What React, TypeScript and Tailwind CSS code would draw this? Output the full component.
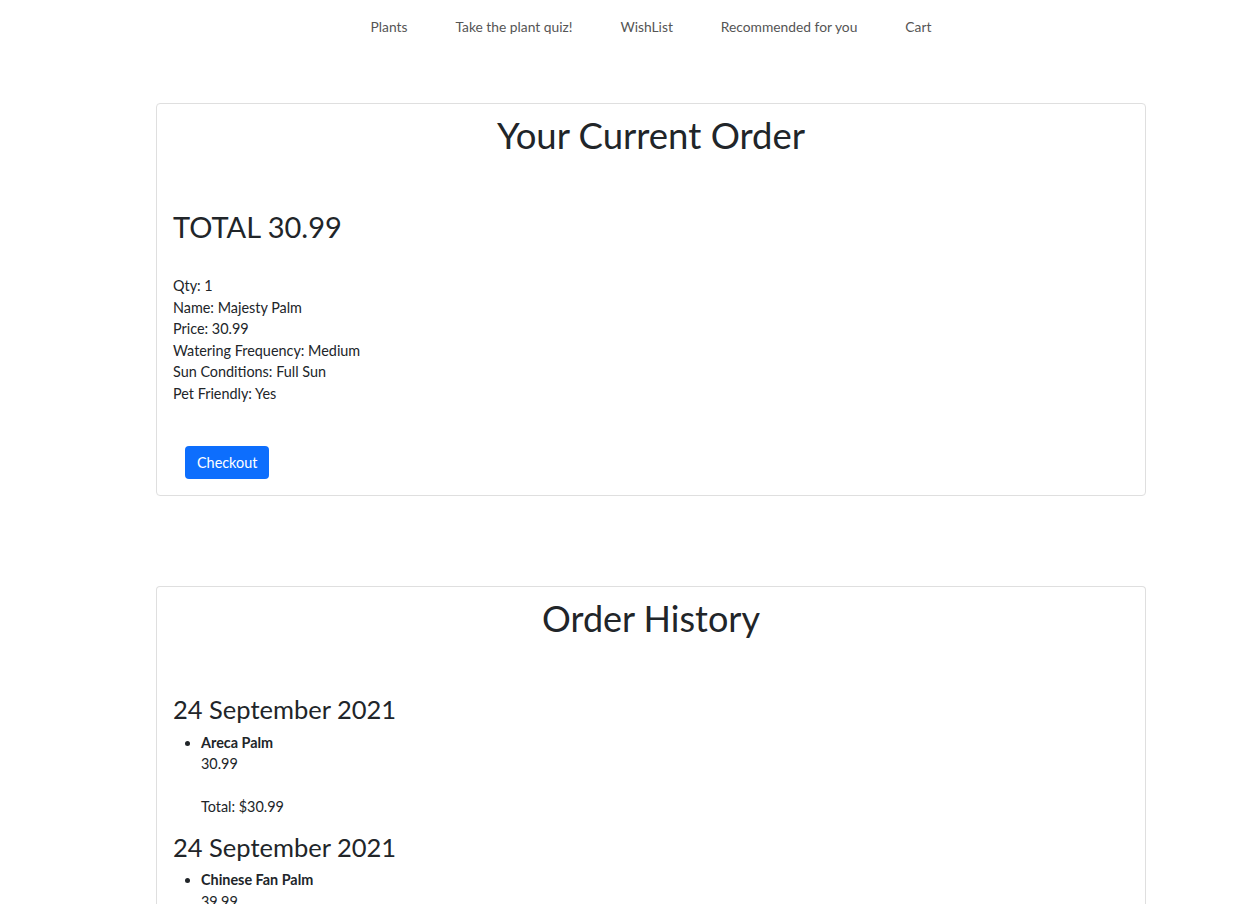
import React from "react";

const font = { fontFamily: "Lato, 'Liberation Sans', sans-serif" };

export default function App() {
  return (
    <div className="min-h-[904px] bg-white pl-[60px] text-[#212529]" style={font}>
      <nav className="flex justify-center gap-[48px] pt-[17px] pb-[7px] text-[13.8px] text-[#555]">
        <a className="leading-[20px]">Plants</a>
        <a className="leading-[20px]">Take the plant quiz!</a>
        <a className="leading-[20px]">WishList</a>
        <a className="leading-[20px]">Recommended for you</a>
        <a className="leading-[20px]">Cart</a>
      </nav>

      <div className="mx-auto mt-[59px] w-[990px] rounded-[4px] border border-[#dfdfdf] p-[16px] text-[14.4px] leading-[21.6px]">
        <h1 className="text-center text-[36.5px] leading-[31px]">Your Current Order</h1>
        <h2 className="mt-[57px] text-[29px] leading-[38px]">TOTAL 30.99</h2>
        <div className="mt-[29px]">
          <div>Qty: 1</div>
          <div>Name: Majesty Palm</div>
          <div>Price: 30.99</div>
          <div>Watering Frequency: Medium</div>
          <div>Sun Conditions: Full Sun</div>
          <div>Pet Friendly: Yes</div>
        </div>
        <button className="ml-[12px] mt-[41px] rounded-[4px] bg-[#0d6efd] px-[12px] py-[6px] text-[14.4px] leading-[21px] text-white">
          Checkout
        </button>
      </div>

      <div className="mx-auto mt-[90px] w-[990px] rounded-t-[4px] border border-b-0 border-[#dfdfdf] p-[16px] pb-0 text-[14.4px] leading-[21.6px]">
        <h1 className="text-center text-[36px] leading-[31px]">Order History</h1>
        {[
          { name: "Areca Palm", price: "30.99" },
          { name: "Chinese Fan Palm", price: "39.99" },
        ].map((o, i) => (
          <div key={i} className={i === 0 ? "mt-[60.5px]" : "mt-[13.7px]"}>
            <h3 className="text-[25.5px] leading-[31px]">24 September 2021</h3>
            <ul className="mt-[6.5px] list-disc pl-[28px]">
              <li>
                <div className="font-bold">{o.name}</div>
                <div>{o.price}</div>
                <div className="mt-[21.6px]">Total: ${o.price}</div>
              </li>
            </ul>
          </div>
        ))}
      </div>
    </div>
  );
}
